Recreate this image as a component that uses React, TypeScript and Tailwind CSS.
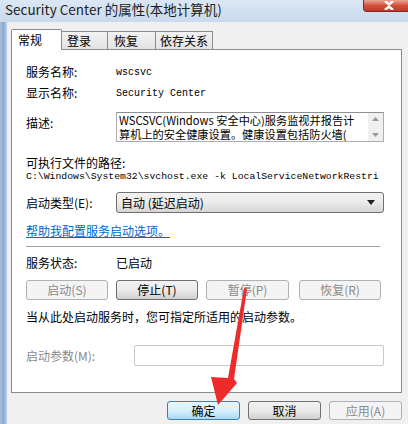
import React from 'react';

const cjk = "font-['Noto_Sans_CJK_SC','Noto_Sans',sans-serif]";
const mono = "font-['Liberation_Mono','Noto_Sans_CJK_SC',monospace]";

const WinButton: React.FC<{ label: string; disabled?: boolean; primary?: boolean; className?: string }> = ({ label, disabled, primary, className }) => {
    const look = disabled
        ? 'border-[#adb2b5] bg-[#f4f4f4] text-[#8a8a8a]'
        : primary
            ? 'border-[#3c7fb1] bg-gradient-to-b from-[#eaf6fd] via-[#d9f0fc] to-[#a7d9f5] text-black'
            : 'border-[#707070] bg-gradient-to-b from-[#f2f2f2] via-[#ebebeb] to-[#cfcfcf] text-black';
    return (
        <div className={`flex items-center justify-center rounded-[3px] border text-[12px] leading-none ${look} ${className ?? ''}`}>
            {label}
        </div>
    );
};

export default function App() {
    return (
        <div className={`relative w-[408px] h-[424px] overflow-hidden bg-[#cddcee] ${cjk}`}>
            {/* title bar */}
            <div className="relative h-[22px] bg-gradient-to-b from-[#dbe7f4] to-[#cad9ec]">
                <div className="pl-[5px] pt-[1px] text-[13.5px] leading-[17px] text-[#1e1e1e]">
                    Security Center 的属性(本地计算机)
                </div>
                <div className="absolute right-[-6px] top-0 flex h-[12px] w-[51px] items-center justify-center rounded-b-[4px] border border-t-0 border-[#6d3029] bg-gradient-to-b from-[#e8a396] via-[#d4503b] to-[#c13a24]">
                    <svg width="12" height="9" viewBox="0 0 12 9">
                        <path d="M2 0 L6 3.5 L10 0 M2 9 L6 5.5 L10 9" stroke="white" strokeWidth="2.4" fill="none" />
                    </svg>
                </div>
            </div>

            <div className="flex h-[402px]">
                {/* left frame */}
                <div className="w-[7px] bg-gradient-to-r from-[#a9c1de] via-[#8aaad3] to-[#c2d3e8]" />
                <div className="flex-1 bg-[#f0f0f0] pl-[4px]">
                    {/* tabs */}
                    <div className="flex h-[27px] items-end pt-[7px] text-[12px] whitespace-nowrap">
                        <div className="relative z-10 mb-[-1px] flex h-[21px] w-[51px] items-start rounded-t-[2px] border border-b-0 border-[#898c95] bg-white pl-[6px] pt-[2px] leading-[16px]">
                            常规
                        </div>
                        <div className="flex h-[18px] w-[46px] items-start border border-b-0 border-l-0 border-[#898c95] bg-gradient-to-b from-[#f2f2f2] to-[#e3e3e3] pl-[5px] pt-[1px] leading-[16px]">
                            登录
                        </div>
                        <div className="flex h-[18px] w-[48px] items-start border border-b-0 border-l-0 border-[#898c95] bg-gradient-to-b from-[#f2f2f2] to-[#e3e3e3] pl-[6px] pt-[1px] leading-[16px]">
                            恢复
                        </div>
                        <div className="flex h-[18px] w-[57px] items-start border border-b-0 border-l-0 border-[#898c95] bg-gradient-to-b from-[#f2f2f2] to-[#e3e3e3] pl-[4px] pt-[1px] leading-[16px]">
                            依存关系
                        </div>
                    </div>

                    {/* panel */}
                    <div className="flex h-[344px] w-[391px] flex-col border border-[#898c95] bg-white pl-[14px] pr-[17px] text-[12px] text-black">
                        <div className="mt-[12px] flex h-[20px] items-center">
                            <span className="w-[90px]">服务名称:</span>
                            <span className={`${mono} text-[10px]`}>wscsvc</span>
                        </div>
                        <div className="mt-[1px] flex h-[20px] items-center">
                            <span className="w-[90px]">显示名称:</span>
                            <span className={`${mono} text-[10px]`}>Security Center</span>
                        </div>
                        <div className="mt-[9px] flex h-[30px]">
                            <span className="w-[90px] pt-[4px] leading-[14px]">描述:</span>
                            <div className="flex flex-1 border border-[#abadb3] border-t-[#8e8f8f]">
                                <div className="w-[250px] overflow-hidden pl-[2px] text-[11.2px] leading-[14px] whitespace-nowrap">
                                    <div>WSCSVC(Windows 安全中心)服务监视并报告计</div>
                                    <div>算机上的安全健康设置。健康设置包括防火墙(</div>
                                </div>
                                <div className="ml-auto flex w-[15px] flex-col items-center justify-between bg-[#f0f0f0] py-[4px]">
                                    <svg width="7" height="4" viewBox="0 0 7 4"><path d="M0 4 L3.5 0 L7 4 Z" fill="#9a9a9a" /></svg>
                                    <svg width="7" height="4" viewBox="0 0 7 4"><path d="M0 0 L3.5 4 L7 0 Z" fill="#9a9a9a" /></svg>
                                </div>
                            </div>
                        </div>
                        <div className="mt-[14px] h-[14px] leading-[14px]">可执行文件的路径:</div>
                        <div className={`h-[14px] overflow-hidden whitespace-nowrap text-[9.8px] leading-[14px] ${mono}`}>
                            C:\Windows\System32\svchost.exe -k LocalServiceNetworkRestri
                        </div>
                        <div className="mt-[8px] flex h-[21px] items-center">
                            <span className="w-[90px]">启动类型(E):</span>
                            <div className="flex h-[21px] flex-1 items-center justify-between rounded-[3px] border border-[#707070] bg-gradient-to-b from-[#f2f2f2] via-[#ebebeb] to-[#d5d5d5] pl-[4px] pr-[8px]">
                                <span>自动 (延迟启动)</span>
                                <svg width="8" height="5" viewBox="0 0 8 5"><path d="M0 0 L4 5 L8 0 Z" fill="#222" /></svg>
                            </div>
                        </div>
                        <div className="mt-[11px] h-[14px] leading-[14px]">
                            <span className="text-[#0066cc] underline">帮助我配置服务启动选项。</span>
                        </div>
                        <div className="mt-[8px] h-[1px] w-[354px] bg-[#a0a0a0] shadow-[0_1px_0_#ffffff]" />
                        <div className="mt-[9px] flex h-[14px] items-center leading-[14px]">
                            <span className="w-[90px]">服务状态:</span>
                            <span>已启动</span>
                        </div>
                        <div className="mt-[10px] flex h-[20px] gap-[8px]">
                            <WinButton label="启动(S)" disabled className="w-[82px]" />
                            <WinButton label="停止(T)" className="w-[82px]" />
                            <WinButton label="暂停(P)" disabled className="w-[83px]" />
                            <WinButton label="恢复(R)" disabled className="w-[82px] ml-[2px]" />
                        </div>
                        <div className="mt-[10px] h-[14px] leading-[14px]">当从此处启动服务时，您可指定所适用的启动参数。</div>
                        <div className="mt-[21px] flex h-[21px] items-center">
                            <span className="w-[108px] text-[#8a8a8a]">启动参数(M):</span>
                            <div className="h-[21px] flex-1 rounded-[2px] border border-[#c8c8c8] bg-white" />
                        </div>
                    </div>

                    {/* bottom buttons */}
                    <div className="mt-[8px] flex w-[391px] justify-end gap-[8px]">
                        <WinButton label="确定" primary className="h-[19px] w-[73px]" />
                        <WinButton label="取消" className="h-[19px] w-[73px]" />
                        <WinButton label="应用(A)" disabled className="h-[19px] w-[73px]" />
                    </div>
                </div>
            </div>

            {/* red annotation arrow */}
            <svg className="absolute left-0 top-0" width="408" height="424" viewBox="0 0 408 424">
                <polygon points="244,288 247,289 234,379 237,383 218,405 211,377 228,378" fill="#ee2b2b" />
            </svg>
        </div>
    );
}
